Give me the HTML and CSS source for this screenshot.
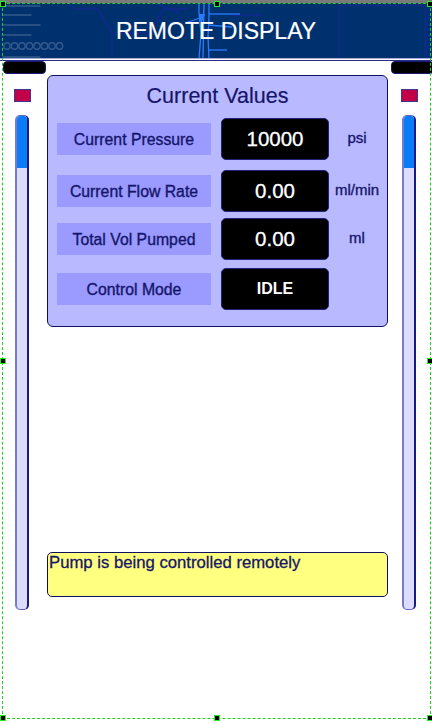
FILE: index.html
```
<!DOCTYPE html>
<html>
<head>
<meta charset="utf-8">
<link rel="stylesheet" href="styles.css">
</head>
<body>
<div class="screen">
  <div class="top-strip"></div>
  <header class="header">
    <svg class="header-art" width="432" height="55" viewBox="0 0 432 55">
      <g stroke="#33598c" stroke-width="1.4" fill="none" stroke-linecap="round">
        <line x1="3" y1="3" x2="40" y2="3"/>
        <line x1="3" y1="12" x2="31" y2="12"/>
        <line x1="3" y1="22" x2="40" y2="22"/>
        <line x1="3" y1="32" x2="31" y2="32"/>
        <line x1="3" y1="54" x2="40" y2="54"/>
        <circle cx="7" cy="43" r="3.2"/>
        <circle cx="14.5" cy="43" r="3.2"/>
        <circle cx="22" cy="43" r="3.2"/>
        <circle cx="29.5" cy="43" r="3.2"/>
        <circle cx="37" cy="43" r="3.2"/>
        <circle cx="44.5" cy="43" r="3.2"/>
        <circle cx="52" cy="43" r="3.2"/>
        <circle cx="59.5" cy="43" r="3.2"/>
      </g>
      <g stroke="#0c2a86" stroke-width="2" fill="none">
        <path d="M68 0 L75 6 L98 6 L112 30 L112 56"/>
        <path d="M112 30 L150 30 L163 6 L190 6"/>
        <path d="M155 0 L180 10"/>
        <path d="M230 12 L262 12"/>
        <rect x="339" y="2" width="86" height="56" rx="5"/>
        <path d="M426 2 L426 58"/>
      </g>
      <g stroke="#2a7cff" stroke-width="1.3" fill="none">
        <path d="M199 0 L199 10 L201 30 L199 56"/>
        <path d="M209 0 L209 14 L208 34 L209 56"/>
        <path d="M204 0 L203 56"/>
        <line x1="209" y1="11" x2="240" y2="11"/>
        <line x1="208" y1="22" x2="232" y2="24"/>
        <line x1="208" y1="47" x2="227" y2="47"/>
        <line x1="185" y1="20" x2="200" y2="15"/>
      </g>
      <path d="M199 11 L205 11 L201 22 Z" fill="#2a7cff"/>
    </svg>
    <h1 class="header-title">REMOTE DISPLAY</h1>
  </header>
  <div class="header-rule"></div>
  <div class="pill-row">
    <div class="pill pill-left"></div>
    <div class="pill pill-right"></div>
  </div>
  <main class="main">
    <aside class="side side-left">
      <div class="indicator"></div>
      <div class="slider"><div class="slider-fill"></div></div>
    </aside>
    <section class="center">
      <div class="card">
        <h2 class="card-title">Current Values</h2>
        <div class="rows">
          <div class="row">
            <div class="label">Current Pressure</div>
            <div class="value">10000</div>
            <div class="unit">psi</div>
          </div>
          <div class="row row-2">
            <div class="label">Current Flow Rate</div>
            <div class="value">0.00</div>
            <div class="unit">ml/min</div>
          </div>
          <div class="row">
            <div class="label">Total Vol Pumped</div>
            <div class="value">0.00</div>
            <div class="unit">ml</div>
          </div>
          <div class="row">
            <div class="label">Control Mode</div>
            <div class="value value-mode">IDLE</div>
            <div class="unit"></div>
          </div>
        </div>
      </div>
      <div class="status">Pump is being controlled remotely</div>
    </section>
    <aside class="side side-right">
      <div class="indicator"></div>
      <div class="slider"><div class="slider-fill"></div></div>
    </aside>
  </main>
  <div class="selection">
    <span class="handle h-tl"></span>
    <span class="handle h-tm"></span>
    <span class="handle h-tr"></span>
    <span class="handle h-ml"></span>
    <span class="handle h-mr"></span>
    <span class="handle h-bl"></span>
    <span class="handle h-bm"></span>
    <span class="handle h-br"></span>
  </div>
</div>
</body>
</html>
```
FILE: styles.css
```
* { box-sizing: border-box; }
html, body { margin: 0; padding: 0; background: #ffffff; }
body { font-family: "Liberation Sans", Arial, sans-serif; }

.screen {
  position: relative;
  width: 432px;
  height: 723px;
  overflow: hidden;
  background: #ffffff;
}

.top-strip { height: 3px; background: #7a7a7a; }

.header {
  position: relative;
  height: 55px;
  background: #00316f;
  display: flex;
  align-items: center;
  justify-content: center;
}
.header-art { position: absolute; left: 0; top: 0; }
.header-title {
  position: relative;
  margin: 0;
  color: #ffffff;
  font-weight: normal;
  font-size: 23px;
  padding-top: 2px;
  -webkit-text-stroke: 0.2px #ffffff;
}

.header-rule {
  height: 3px;
  border-top: 1px solid #a8a8d8;
  border-bottom: 1px solid #2a2a8a;
  background: #ffffff;
}

.pill-row {
  display: flex;
  justify-content: space-between;
  height: 13px;
}
.pill {
  width: 43px;
  height: 13px;
  background: #000000;
  border: 1px solid #1a1a70;
  border-radius: 4px;
}
.pill-left { margin-left: 3px; }
.pill-right { margin-right: -2px; }

.main {
  display: grid;
  grid-template-columns: 47px 341px 1fr;
  margin-top: 1px;
}

.side {
  display: flex;
  flex-direction: column;
  padding-top: 14px;
}
.side-left { padding-left: 14px; }
.side-right { padding-left: 13px; }

.indicator {
  flex: none;
  width: 17px;
  height: 13px;
  background: #c2004a;
  border: 1px solid #3a3a90;
}

.slider {
  flex: none;
  margin-top: 13px;
  margin-left: 1px;
  width: 14px;
  height: 495px;
  background: #dcdcfd;
  border: 1px solid #6666c0;
  border-right: 2px solid #1a1a80;
  border-left: 2px solid #7a7acc;
  border-radius: 5px;
  overflow: hidden;
}
.slider-fill {
  height: 52px;
  background: #0a7cf8;
}

.center { display: flex; flex-direction: column; }

.card {
  height: 252px;
  background: #b9b9ff;
  border: 1px solid #101060;
  border-radius: 6px;
  padding: 0 0 0 9px;
}
.card-title {
  margin: 0;
  height: 41px;
  line-height: 41px;
  text-align: center;
  font-size: 21.5px;
  font-weight: normal;
  color: #15156a;
  padding-right: 9px;
  -webkit-text-stroke: 0.2px #15156a;
}
.rows {
  display: flex;
  flex-direction: column;
  gap: 8px;
  margin-top: 1px;
}
.row {
  display: flex;
  align-items: center;
  height: 42px;
}
.row-2 { margin-top: 2px; margin-bottom: -2px; }
.label {
  width: 154px;
  height: 32px;
  background: #9a9aff;
  color: #15156a;
  font-size: 15.8px;
  display: flex;
  align-items: center;
  justify-content: center;
  padding-top: 1px;
  -webkit-text-stroke: 0.35px #15156a;
}
.value {
  margin-left: 10px;
  width: 108px;
  height: 42px;
  background: #000000;
  border: 1px solid #22227a;
  border-radius: 5px;
  color: #ffffff;
  font-size: 20.5px;
  display: flex;
  align-items: center;
  justify-content: center;
  -webkit-text-stroke: 0.3px #ffffff;
}
.value-mode { font-size: 16px; font-weight: bold; -webkit-text-stroke: 0; }
.unit {
  width: 56px;
  text-align: center;
  color: #15156a;
  font-size: 15px;
  padding-bottom: 4px;
  -webkit-text-stroke: 0.35px #15156a;
}

.status {
  margin-top: 225px;
  height: 45px;
  background: #ffff80;
  border: 1px solid #101060;
  border-radius: 5px;
  color: #15156a;
  font-size: 16.7px;
  line-height: 20px;
  padding: 0 0 0 1px;
  -webkit-text-stroke: 0.3px #15156a;
}

.selection {
  position: absolute;
  left: 2px;
  top: 3px;
  width: 429px;
  height: 716px;
  border: 1px dashed #22cc22;
  pointer-events: none;
}
.handle {
  position: absolute;
  width: 6px;
  height: 6px;
  background: #000000;
  border: 1px solid #22ee22;
}
.h-tl { left: -3px; top: -3px; }
.h-tm { left: 211px; top: -3px; }
.h-tr { right: -3px; top: -3px; }
.h-ml { left: -3px; top: 354px; }
.h-mr { right: -3px; top: 354px; }
.h-bl { left: -3px; bottom: -3px; }
.h-bm { left: 211px; bottom: -3px; }
.h-br { right: -3px; bottom: -3px; }
```
